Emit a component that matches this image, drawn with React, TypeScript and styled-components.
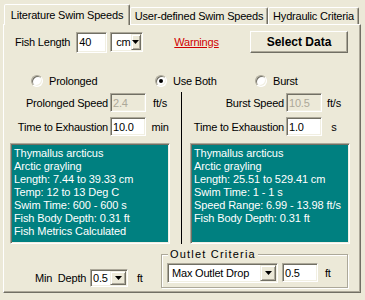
import React from 'react';
import styled, { createGlobalStyle } from 'styled-components';

// Classic Windows colours
const face = '#ECE9D8';
const light = '#F1EFE2';
const shadow = '#ACA899';
const dark = '#716F64';

const GlobalStyle = createGlobalStyle`
  html, body { margin: 0; padding: 0; background: ${face}; }
  body {
    font-family: "Liberation Sans", Arial, sans-serif;
    font-size: 11px;
    letter-spacing: -0.2px;
    color: #000;
  }
`;

const Window = styled.div`
  width: 365px;
  height: 300px;
  box-sizing: border-box;
  padding: 4px 4px 0 3px;
  background: ${face};
  overflow: hidden;
`;

const TabStrip = styled.div`
  display: flex;
  align-items: flex-start;
  height: 21px;
  margin: 0 0 -1px 1px;
  position: relative;
  z-index: 1;
`;

const Tab = styled.div<{ $active?: boolean; $w: number }>`
  box-sizing: border-box;
  width: ${p => p.$w}px;
  height: ${p => (p.$active ? 21 : 17)}px;
  margin-top: ${p => (p.$active ? 0 : 3)}px;
  border: 1px solid;
  border-bottom: none;
  border-color: #fff ${dark} transparent #fff;
  box-shadow: inset -1px 0 ${shadow};
  border-radius: 2px 2px 0 0;
  background: ${face};
  display: flex;
  align-items: center;
  justify-content: center;
  white-space: nowrap;
`;

const Panel = styled.div`
  box-sizing: border-box;
  width: 358px;
  height: 269px;
  border: 1px solid;
  border-color: #fff ${dark} ${dark} #fff;
  box-shadow: inset -1px -1px ${shadow};
  display: flex;
  flex-direction: column;
`;

const TopRow = styled.div`
  display: flex;
  align-items: center;
  height: 22px;
  margin-top: 6px;
  padding: 0 12px 0 11px;
`;

const Label = styled.span<{ $gap?: number }>`
  margin-right: ${p => p.$gap ?? 0}px;
  white-space: nowrap;
`;

const TextBox = styled.div<{ $w: number; $h: number; $ml?: number; $disabled?: boolean }>`
  box-sizing: border-box;
  width: ${p => p.$w}px;
  height: ${p => p.$h}px;
  margin-left: ${p => p.$ml ?? 0}px;
  background: ${p => (p.$disabled ? face : '#fff')};
  color: ${p => (p.$disabled ? shadow : '#000')};
  border: 1px solid;
  border-color: ${shadow} #fff #fff ${shadow};
  box-shadow: inset 1px 1px ${dark}, inset -1px -1px ${light};
  padding-left: 2px;
  display: flex;
  align-items: center;
`;

const Combo = styled.div<{ $w: number; $h: number; $ml: number }>`
  box-sizing: border-box;
  width: ${p => p.$w}px;
  height: ${p => p.$h}px;
  margin-left: ${p => p.$ml}px;
  background: #fff;
  border: 1px solid;
  border-color: ${shadow} #fff #fff ${shadow};
  box-shadow: inset 1px 1px ${dark}, inset -1px -1px ${light};
  padding: 1px;
  display: flex;
`;

const ComboText = styled.span<{ $pad: number }>`
  flex: 1;
  display: flex;
  align-items: center;
  padding-left: ${p => p.$pad}px;
  white-space: nowrap;
`;

const DropButton = styled.span`
  box-sizing: border-box;
  width: 16px;
  background: ${face};
  border: 1px solid;
  border-color: ${light} ${dark} ${dark} ${light};
  box-shadow: inset 1px 1px #fff, inset -1px -1px ${shadow};
  display: flex;
  align-items: center;
  justify-content: center;
`;

const WarningLink = styled.a`
  margin-left: 31px;
  color: #d00000;
  text-decoration: underline;
`;

const PushButton = styled.button`
  box-sizing: border-box;
  margin-left: auto;
  width: 98px;
  height: 22px;
  background: ${face};
  border: 1px solid;
  border-color: #fff ${dark} ${dark} #fff;
  box-shadow: inset -1px -1px ${shadow};
  font-family: "Liberation Sans", Arial, sans-serif;
  font-size: 12px;
  font-weight: bold;
  letter-spacing: 0;
  color: #000;
  padding: 0;
`;

const RadioRow = styled.div`
  display: flex;
  align-items: center;
  height: 14px;
  margin-top: 21px;
  padding-left: 27px;
`;

const RadioItem = styled.label<{ $w?: number }>`
  display: flex;
  align-items: center;
  gap: 6px;
  width: ${p => (p.$w ? `${p.$w}px` : 'auto')};
`;

const RadioDot = styled.span<{ $on?: boolean }>`
  box-sizing: border-box;
  width: 12px;
  height: 12px;
  border-radius: 50%;
  border: 1px solid;
  border-color: ${shadow} #fff #fff ${shadow};
  box-shadow: inset 1px 1px ${dark}, inset -1px -1px ${light};
  background: #fff;
  display: flex;
  align-items: center;
  justify-content: center;

  &::after {
    content: '';
    width: 4px;
    height: 4px;
    border-radius: 50%;
    background: #000;
    display: ${p => (p.$on ? 'block' : 'none')};
  }
`;

const Columns = styled.div`
  display: grid;
  grid-template-columns: 177px 1fr;
  height: 152px;
  margin-top: 4px;
`;

const Column = styled.div<{ $divider?: boolean }>`
  display: flex;
  flex-direction: column;
  gap: 5px;
  padding-top: 1px;
  border-left: ${p => (p.$divider ? '1px solid #000' : 'none')};
`;

const SpeedRow = styled.div<{ $labelW: number; $unitW: number }>`
  display: grid;
  grid-template-columns: ${p => p.$labelW}px 36px ${p => p.$unitW}px;
  column-gap: 2px;
  align-items: center;
  height: 19px;
`;

const RowLabel = styled.span`
  text-align: right;
  white-space: nowrap;
`;

const Unit = styled.span`
  text-align: center;
`;

const InfoBox = styled.div<{ $indent: number }>`
  box-sizing: border-box;
  margin: 2px 0 0 ${p => p.$indent}px;
  width: 160px;
  height: 101px;
  background: #008080;
  color: #fff;
  border: 1px solid;
  border-color: ${shadow} #fff #fff ${shadow};
  box-shadow: inset 1px 1px ${dark}, inset -1px -1px ${light};
  padding: 3px 3px;
  line-height: 13px;
  letter-spacing: -0.1px;
  white-space: nowrap;
`;

const BottomRow = styled.div`
  display: flex;
  align-items: flex-start;
  padding-top: 4px;
`;

const DepthGroup = styled.div`
  display: grid;
  grid-template-columns: 55px 38px auto;
  align-items: center;
  width: 157px;
  box-sizing: border-box;
  padding-left: 31px;
  margin-top: 21px;
  height: 18px;
`;

const GroupBox = styled.fieldset`
  box-sizing: border-box;
  width: 187px;
  margin: 0;
  padding: 3px 5px 4px;
  border: 1px solid ${shadow};
  box-shadow: inset 1px 1px #fff, 1px 1px #fff;
  display: flex;
  align-items: flex-start;
`;

const Legend = styled.legend`
  padding: 0 2px;
  margin-left: 1px;
  line-height: 12px;
  letter-spacing: 1.2px;
  background: ${face};
`;

const InlineUnit = styled.span<{ $gap: number }>`
  margin-left: ${p => p.$gap}px;
  align-self: center;
`;

const Arrow = () => (
  <svg width="7" height="4" viewBox="0 0 7 4">
    <polygon points="0,0 7,0 3.5,4" fill="#000" />
  </svg>
);

const Dropdown: React.FC<{ w: number; h: number; pad: number; ml?: number; text: string }> = ({
  w,
  h,
  pad,
  ml = 0,
  text,
}) => (
  <Combo $w={w} $h={h} $ml={ml}>
    <ComboText $pad={pad}>{text}</ComboText>
    <DropButton>
      <Arrow />
    </DropButton>
  </Combo>
);

const prolongedInfo = [
  'Thymallus arcticus',
  'Arctic grayling',
  'Length: 7.44 to 39.33 cm',
  'Temp: 12 to 13 Deg C',
  'Swim Time: 600 - 600 s',
  'Fish Body Depth: 0.31 ft',
  'Fish Metrics Calculated',
];

const burstInfo = [
  'Thymallus arcticus',
  'Arctic grayling',
  'Length: 25.51 to 529.41 cm',
  'Swim Time: 1 - 1 s',
  'Speed Range: 6.99 - 13.98 ft/s',
  'Fish Body Depth: 0.31 ft',
];

const App: React.FC = () => {
  return (
    <Window>
      <GlobalStyle />
      <TabStrip>
        <Tab $active $w={126}>Literature Swim Speeds</Tab>
        <Tab $w={138}>User-defined Swim Speeds</Tab>
        <Tab $w={91}>Hydraulic Criteria</Tab>
      </TabStrip>
      <Panel>
        <TopRow>
          <Label $gap={6}>Fish Length</Label>
          <TextBox $w={31} $h={21}>40</TextBox>
          <Dropdown w={33} h={20} pad={4} ml={3} text="cm" />
          <WarningLink>Warnings</WarningLink>
          <PushButton>Select Data</PushButton>
        </TopRow>

        <RadioRow>
          <RadioItem $w={124}>
            <RadioDot />
            Prolonged
          </RadioItem>
          <RadioItem $w={100}>
            <RadioDot $on />
            Use Both
          </RadioItem>
          <RadioItem>
            <RadioDot />
            Burst
          </RadioItem>
        </RadioRow>

        <Columns>
          <Column>
            <SpeedRow $labelW={104} $unitW={24}>
              <RowLabel>Prolonged Speed</RowLabel>
              <TextBox $w={36} $h={19} $disabled>2.4</TextBox>
              <Unit>ft/s</Unit>
            </SpeedRow>
            <SpeedRow $labelW={104} $unitW={24}>
              <RowLabel>Time to Exhaustion</RowLabel>
              <TextBox $w={36} $h={19}>10.0</TextBox>
              <Unit>min</Unit>
            </SpeedRow>
            <InfoBox $indent={6}>
              {prolongedInfo.map(line => (
                <div key={line}>{line}</div>
              ))}
            </InfoBox>
          </Column>
          <Column $divider>
            <SpeedRow $labelW={102} $unitW={20}>
              <RowLabel>Burst Speed</RowLabel>
              <TextBox $w={36} $h={19} $disabled>10.5</TextBox>
              <Unit>ft/s</Unit>
            </SpeedRow>
            <SpeedRow $labelW={102} $unitW={20}>
              <RowLabel>Time to Exhaustion</RowLabel>
              <TextBox $w={36} $h={19}>1.0</TextBox>
              <Unit>s</Unit>
            </SpeedRow>
            <InfoBox $indent={8}>
              {burstInfo.map(line => (
                <div key={line}>{line}</div>
              ))}
            </InfoBox>
          </Column>
        </Columns>

        <BottomRow>
          <DepthGroup>
            <Label>Min&nbsp; Depth</Label>
            <Dropdown w={38} h={18} pad={1} text="0.5" />
            <InlineUnit $gap={9}>ft</InlineUnit>
          </DepthGroup>
          <GroupBox>
            <Legend>Outlet Criteria</Legend>
            <Dropdown w={111} h={20} pad={3} text="Max Outlet Drop" />
            <TextBox $w={36} $h={19} $ml={4}>0.5</TextBox>
            <InlineUnit $gap={7}>ft</InlineUnit>
          </GroupBox>
        </BottomRow>
      </Panel>
    </Window>
  );
};

export default App;
